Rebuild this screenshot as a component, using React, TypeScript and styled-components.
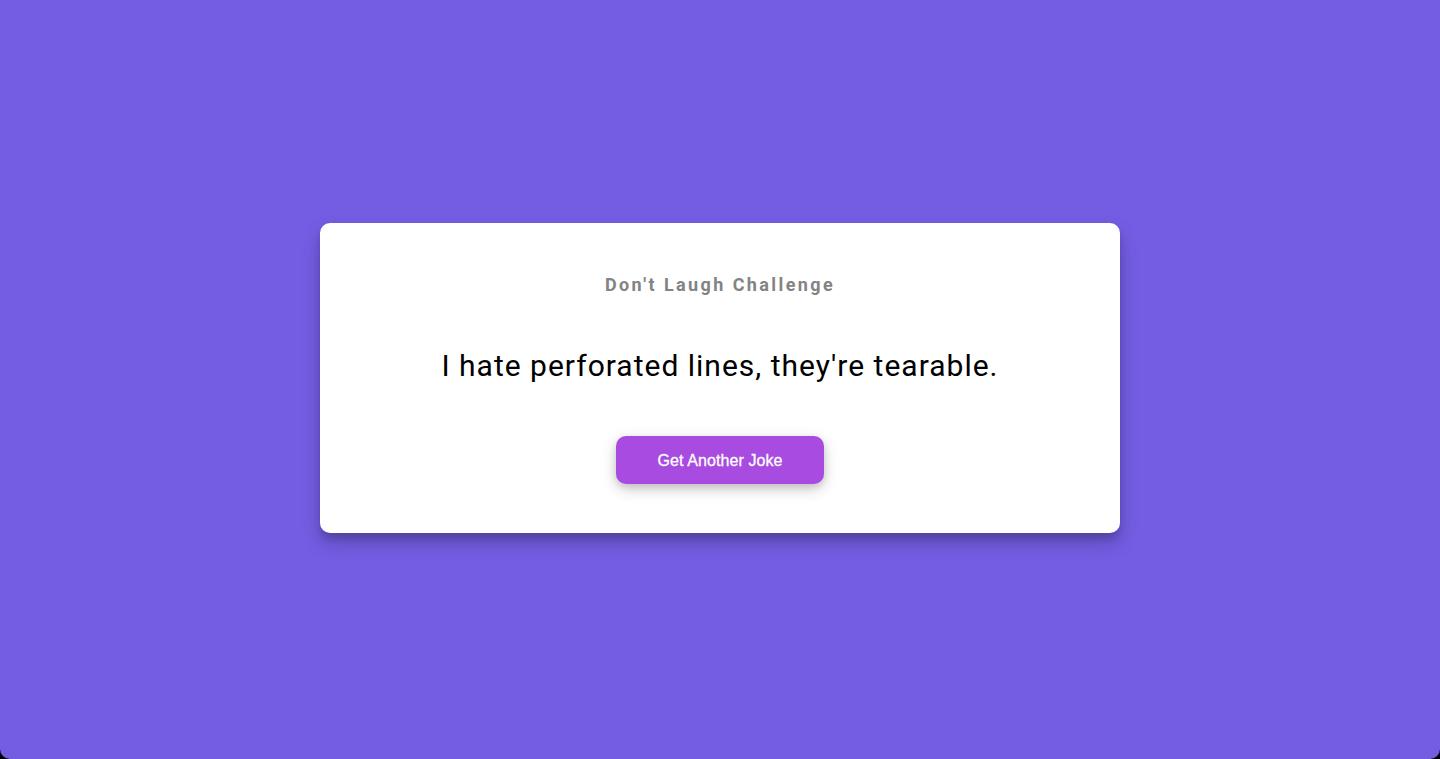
import React from "react";
import styled, { createGlobalStyle } from "styled-components";

const Global = createGlobalStyle`
  html, body { margin: 0; padding: 0; background: #000; }
  #root { min-height: 100vh; }
`;

const Page = styled.div`
  height: 759px;
  background: #745de3;
  border-radius: 0 0 10px 10px;
  display: flex;
  align-items: center;
  justify-content: center;
  font-family: Roboto, "Liberation Sans", sans-serif;
`;

const Card = styled.div`
  width: 800px;
  box-sizing: border-box;
  background: #fff;
  border-radius: 10px;
  box-shadow: 0 10px 20px rgba(0, 0, 0, 0.2), 0 6px 6px rgba(0, 0, 0, 0.13);
  padding: 51px 20px 49px;
  display: flex;
  flex-direction: column;
  align-items: center;
  text-align: center;
  margin-top: -3px;
`;

const Title = styled.h3`
  margin: 0;
  font-size: 18px;
  line-height: 22px;
  font-weight: 700;
  letter-spacing: 2.4px;
  color: #838383;
`;

const Joke = styled.div`
  margin: 53px 0 53px;
  font-size: 30px;
  line-height: 34px;
  letter-spacing: 1px;
  color: #000;
`;

const Button = styled.button`
  width: 208px;
  height: 48px;
  padding: 2px 0 0;
  border: none;
  border-radius: 10px;
  background: #a84be1;
  color: #fff;
  font-family: "Liberation Sans", Arial, sans-serif;
  font-size: 16px;
  letter-spacing: 0.1px;
  -webkit-text-stroke: 0.3px #fff;
  box-shadow: 0 5px 15px rgba(0, 0, 0, 0.2), 0 3px 6px rgba(0, 0, 0, 0.1);
  cursor: pointer;
`;

export default function App() {
  return (
    <>
      <Global />
      <Page>
        <Card>
          <Title>Don't Laugh Challenge</Title>
          <Joke>I hate perforated lines, they're tearable.</Joke>
          <Button>Get Another Joke</Button>
        </Card>
      </Page>
    </>
  );
}
